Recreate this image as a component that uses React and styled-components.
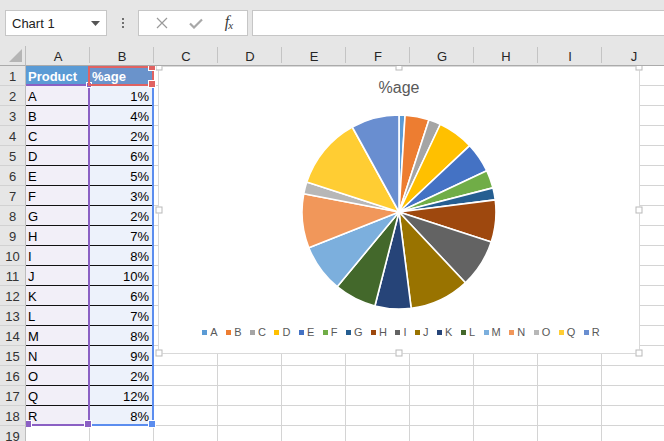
import React from "react";
import styled, { createGlobalStyle, css } from "styled-components";

const GlobalStyle = createGlobalStyle`
  html, body { margin: 0; padding: 0; background: #fff; }
  body { font-family: "Liberation Sans", Arial, sans-serif; overflow: hidden; }
  * { box-sizing: border-box; }
`;

const Page = styled.div`
  width: 664px;
  height: 441px;
  overflow: hidden;
  background: #fff;
`;

const Toolbar = styled.div`
  height: 46px;
  background: #e6e6e6;
  display: flex;
  align-items: flex-start;
  padding: 10px 0 0 5px;
`;

const NameBox = styled.div`
  width: 102px;
  height: 26px;
  background: #fff;
  border: 1px solid #c6c6c6;
  display: flex;
  align-items: center;
  justify-content: space-between;
  padding: 0 6px 0 6px;
  font-size: 13px;
  color: #222;
`;

const Dots = styled.div`
  width: 31px;
  height: 26px;
  display: flex;
  flex-direction: column;
  align-items: center;
  justify-content: center;
  gap: 2px;
  span {
    width: 2px;
    height: 2px;
    background: #6f6f6f;
  }
`;

const FxGroup = styled.div`
  width: 110px;
  height: 26px;
  background: #fff;
  border: 1px solid #c6c6c6;
  display: flex;
  align-items: center;
  justify-content: space-around;
  padding: 0 4px 0 6px;
`;

const FxIcon = styled.span`
  font-family: "Liberation Serif", "Times New Roman", serif;
  font-style: italic;
  font-size: 16px;
  color: #3a3a3a;
  letter-spacing: -1px;
  padding-bottom: 2px;
  sub {
    font-size: 11px;
    vertical-align: baseline;
    position: relative;
    top: 2px;
  }
`;

const FormulaInput = styled.div`
  flex: 1;
  height: 26px;
  margin-left: 4px;
  background: #fff;
  border: 1px solid #c6c6c6;
  border-right: none;
`;

const Sheet = styled.div`
  position: relative;
  display: grid;
  grid-template-columns: 26px repeat(10, 64px);
  grid-auto-rows: 20px;
  height: 395px;
  overflow: hidden;
`;

const Corner = styled.div`
  position: relative;
  z-index: 3;
  background: #e6e6e6;
  border-right: 1px solid #bdbdbd;
  border-bottom: 1px solid #ababab;
  display: flex;
  align-items: flex-end;
  justify-content: flex-end;
  padding: 0 3px 3px 0;
`;

const ColHeader = styled.div`
  position: relative;
  z-index: 3;
  background: #e6e6e6;
  border-bottom: 1px solid #ababab;
  font-size: 13px;
  color: #262626;
  display: flex;
  align-items: center;
  justify-content: center;
  padding-top: 1px;
  &::after {
    content: "";
    position: absolute;
    right: 0;
    top: 1px;
    bottom: 2px;
    width: 1px;
    background: #c4c4c4;
  }
`;

const RowHeader = styled.div`
  position: relative;
  z-index: 3;
  background: #e6e6e6;
  border-right: 1px solid #bdbdbd;
  border-bottom: 1px solid #d2d2d2;
  font-size: 13px;
  color: #333;
  display: flex;
  align-items: center;
  justify-content: center;
  padding-top: 1px;
`;

const Cell = styled.div`
  background: ${(p) => p.$bg || "#fff"};
  color: ${(p) => p.$fg || "#000"};
  font-weight: ${(p) => (p.$bold ? 700 : 400)};
  font-size: 13px;
  border-right: 1px solid #d4d4d4;
  border-bottom: 1px solid ${(p) => (p.$rule ? "#111" : "#d4d4d4")};
  display: flex;
  align-items: center;
  justify-content: ${(p) => (p.$right ? "flex-end" : "flex-start")};
  padding: 1px 4px 0 2px;
  white-space: nowrap;
  overflow: hidden;
`;

const handle = (c, pos) => css`
  content: "";
  position: absolute;
  width: 6px;
  height: 6px;
  background: ${c};
  border: 1px solid #fff;
  ${pos}
`;

/* Range highlight drawn over the cells; its corner handles are pseudo-elements */
const SelBox = styled.div`
  position: absolute;
  z-index: 2;
  left: ${(p) => p.$x}px;
  top: ${(p) => p.$y}px;
  width: ${(p) => p.$w}px;
  height: ${(p) => p.$h}px;
  border: 2px solid ${(p) => p.$c};
  ${(p) => (p.$noLeft ? "border-left: none;" : "")}
  pointer-events: none;
  &::after {
    ${(p) => handle(p.$c, p.$after || "right: -4px; bottom: -4px;")}
  }
  ${(p) =>
    p.$before &&
    css`
      &::before {
        ${handle(p.$c, p.$before)}
      }
    `}
`;

const RangeHandle = styled.div`
  position: absolute;
  z-index: 2;
  left: ${(p) => p.$x}px;
  top: ${(p) => p.$y}px;
  width: 6px;
  height: 6px;
  background: ${(p) => p.$c};
  border: 1px solid #fff;
`;

const Chart = styled.div`
  position: absolute;
  z-index: 1;
  left: 158px;
  top: 20px;
  width: 482px;
  height: 288px;
  background: #fff;
  border: 1px solid #d9d9d9;
  display: flex;
  flex-direction: column;
  align-items: center;
`;

const ChartHandle = styled.div`
  position: absolute;
  width: 7px;
  height: 7px;
  background: #fff;
  border: 1px solid #b9b9b9;
  left: ${(p) => p.$x};
  top: ${(p) => p.$y};
  transform: translate(-50%, -50%);
`;

const ChartTitle = styled.div`
  margin-top: 11px;
  height: 20px;
  line-height: 20px;
  font-size: 16px;
  color: #595959;
`;

const PieWrap = styled.div`
  margin-top: 15px;
  width: 198px;
  height: 198px;
`;

const Legend = styled.div`
  margin-top: 15px;
  display: flex;
  align-items: center;
  gap: 8.5px;
  font-size: 11px;
  color: #595959;
  margin-left: 4px;
`;

const LegendItem = styled.div`
  display: flex;
  align-items: center;
  gap: 3px;
  line-height: 12px;
`;

const Swatch = styled.span`
  width: 5px;
  height: 5px;
  background: ${(p) => p.$c};
`;

const data = [
  ["A", 1, "#5B9BD5"],
  ["B", 4, "#ED7D31"],
  ["C", 2, "#A5A5A5"],
  ["D", 6, "#FFC000"],
  ["E", 5, "#4472C4"],
  ["F", 3, "#70AD47"],
  ["G", 2, "#255E91"],
  ["H", 7, "#9E480E"],
  ["I", 8, "#636363"],
  ["J", 10, "#997300"],
  ["K", 6, "#264478"],
  ["L", 7, "#43682B"],
  ["M", 8, "#7CAFDD"],
  ["N", 9, "#F1975A"],
  ["O", 2, "#B7B7B7"],
  ["Q", 12, "#FFCD33"],
  ["R", 8, "#698ED0"],
];

const cols = ["A", "B", "C", "D", "E", "F", "G", "H", "I", "J"];
const handlePos = [
  ["0%", "0%"], ["50%", "0%"], ["100%", "0%"],
  ["0%", "50%"], ["100%", "50%"],
  ["0%", "100%"], ["50%", "100%"], ["100%", "100%"],
];

const PURPLE = "#8B60C4";
const BLUE = "#5B8DEF";
const RED = "#E06262";

function Pie() {
  const cx = 99, cy = 99, r = 97;
  const total = data.reduce((s, d) => s + d[1], 0);
  let a = -Math.PI / 2;
  const paths = data.map(([name, v, c]) => {
    const a1 = a + (v / total) * Math.PI * 2;
    const x0 = cx + r * Math.cos(a), y0 = cy + r * Math.sin(a);
    const x1 = cx + r * Math.cos(a1), y1 = cy + r * Math.sin(a1);
    const large = a1 - a > Math.PI ? 1 : 0;
    a = a1;
    return (
      <path
        key={name}
        d={`M${cx} ${cy} L${x0.toFixed(2)} ${y0.toFixed(2)} A${r} ${r} 0 ${large} 1 ${x1.toFixed(2)} ${y1.toFixed(2)} Z`}
        fill={c}
        stroke="#fff"
        strokeWidth="1.6"
        strokeLinejoin="round"
      />
    );
  });
  return (
    <svg width="198" height="198" viewBox="0 0 198 198">
      {paths}
    </svg>
  );
}

export default function App() {
  const rows = [];
  for (let r = 1; r <= 19; r++) {
    rows.push(<RowHeader key={`rh${r}`}>{r}</RowHeader>);
    cols.forEach((c, ci) => {
      let props = {};
      let content = null;
      if (r === 1 && ci === 0) {
        props = { $bg: "#5B9BD5", $fg: "#fff", $bold: true };
        content = "Product";
      } else if (r === 1 && ci === 1) {
        props = { $bg: "#6A93CB", $fg: "#fff", $bold: true };
        content = "%age";
      } else if (r >= 2 && r <= 18 && ci === 0) {
        props = { $bg: "#F2EFF8", $rule: r < 18 };
        content = data[r - 2][0];
      } else if (r >= 2 && r <= 18 && ci === 1) {
        props = { $bg: "#EDF2FB", $rule: r < 18, $right: true };
        content = `${data[r - 2][1]}%`;
      }
      rows.push(
        <Cell key={`c${r}-${c}`} {...props}>
          {content}
        </Cell>
      );
    });
  }

  return (
    <Page>
      <GlobalStyle />
      <Toolbar>
        <NameBox>
          <span>Chart 1</span>
          <svg width="9" height="5" viewBox="0 0 9 5">
            <path d="M0 0 L9 0 L4.5 5 Z" fill="#555" />
          </svg>
        </NameBox>
        <Dots>
          <span />
          <span />
          <span />
        </Dots>
        <FxGroup>
          <svg width="12" height="12" viewBox="0 0 12 12">
            <path d="M1 1 L11 11 M11 1 L1 11" stroke="#9a9a9a" strokeWidth="1.2" />
          </svg>
          <svg width="14" height="11" viewBox="0 0 14 11">
            <path d="M1 5.5 L5 9.5 L13 1.5" stroke="#a8a8a8" strokeWidth="2.2" fill="none" />
          </svg>
          <FxIcon>
            f<sub>x</sub>
          </FxIcon>
        </FxGroup>
        <FormulaInput />
      </Toolbar>
      <Sheet>
        <Corner>
          <svg width="13" height="13" viewBox="0 0 13 13">
            <path d="M13 0 L13 13 L0 13 Z" fill="#b5b5b5" />
          </svg>
        </Corner>
        {cols.map((c) => (
          <ColHeader key={c}>{c}</ColHeader>
        ))}
        {rows}

        <SelBox $x={88} $y={38} $w={66} $h={342} $c={BLUE} />
        <SelBox
          $x={26}
          $y={38}
          $w={64}
          $h={342}
          $c={PURPLE}
          $noLeft
          $before="left: -2px; bottom: -4px;"
        />
        <RangeHandle $x={86} $y={36} $c={PURPLE} />
        <SelBox
          $x={88}
          $y={20}
          $w={66}
          $h={20}
          $c={RED}
          $before="right: -4px; top: -3px; height: 4px;"
        />

        <Chart>
          {handlePos.map(([x, y]) => (
            <ChartHandle key={x + y} $x={x} $y={y} />
          ))}
          <ChartTitle>%age</ChartTitle>
          <PieWrap>
            <Pie />
          </PieWrap>
          <Legend>
            {data.map(([n, , c]) => (
              <LegendItem key={n}>
                <Swatch $c={c} />
                {n}
              </LegendItem>
            ))}
          </Legend>
        </Chart>
      </Sheet>
    </Page>
  );
}
